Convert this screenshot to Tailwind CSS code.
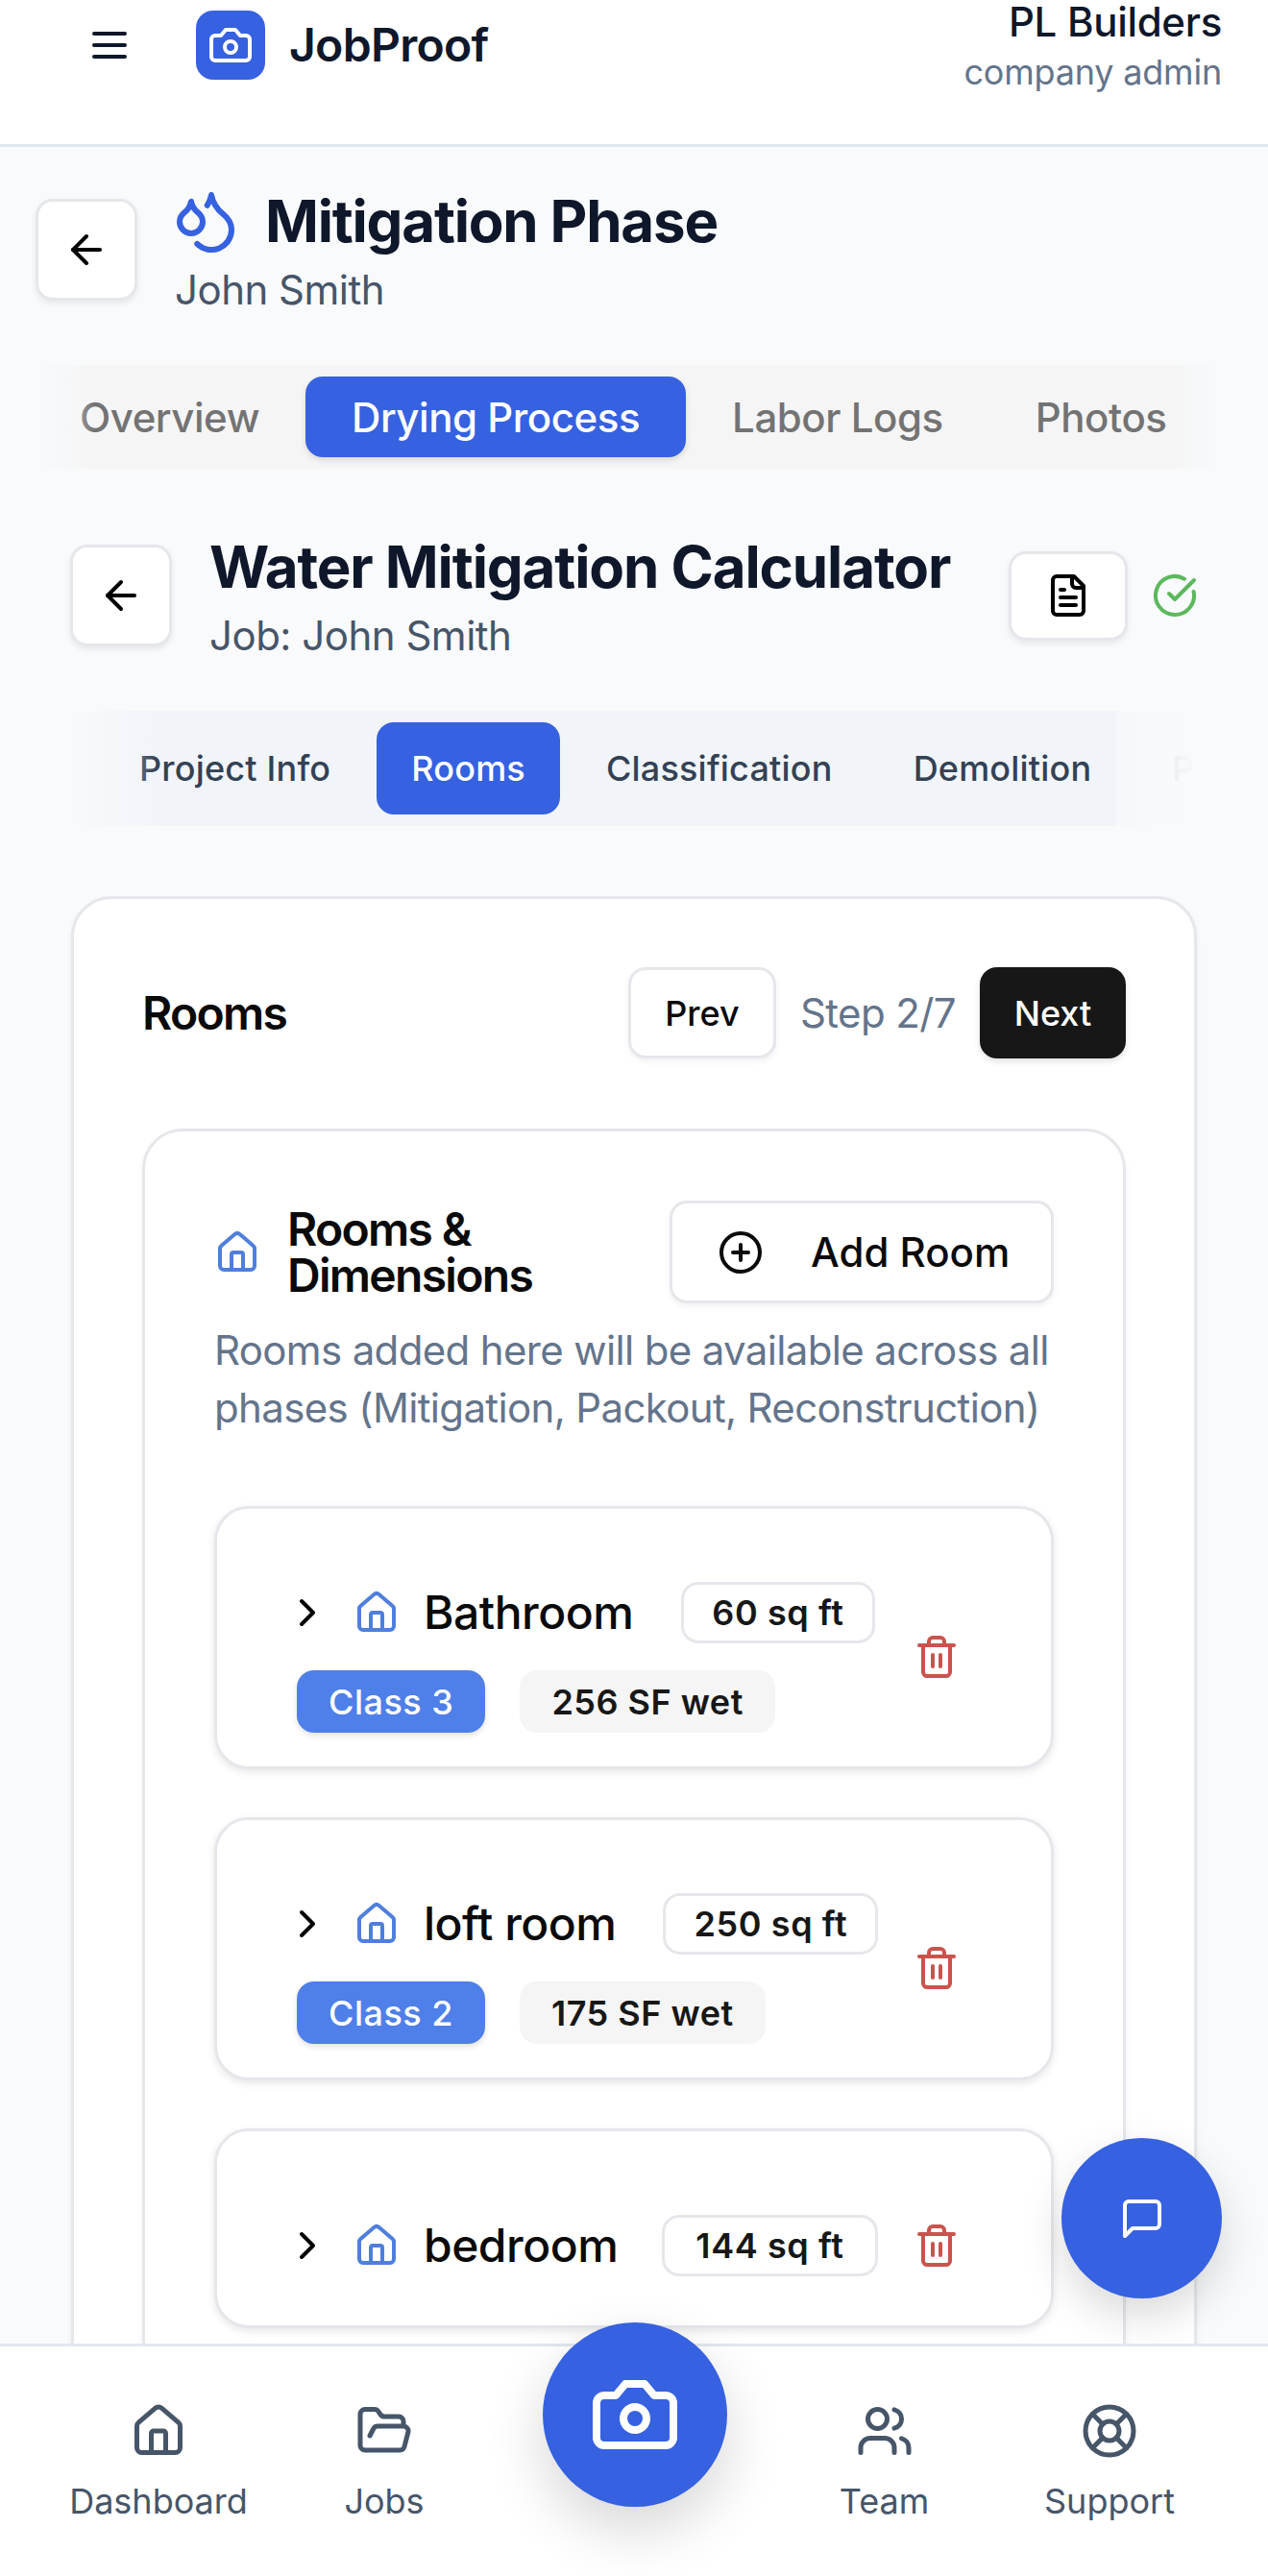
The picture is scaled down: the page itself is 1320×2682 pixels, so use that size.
<!DOCTYPE html>
<html lang="en">
<head>
    <meta charset="UTF-8">
    <meta name="viewport" content="width=device-width, initial-scale=1.0">
    <title>JobProof - Rooms</title>
    <script src="https://cdn.jsdelivr.net/npm/@tailwindcss/browser@4"></script>
</head>
<body class="relative h-[2682px] overflow-hidden bg-[#f8fafc] font-[Inter,sans-serif]">
    <header class="flex h-[153px] justify-between border-b-[3px] border-[#e2e8f0] bg-white pl-[90px] pr-[48px]">
        <div class="flex h-[94px] items-center">
            <svg class="h-12 w-12 text-[#0f172a]" viewBox="0 0 24 24" fill="none" stroke="currentColor" stroke-width="2" stroke-linecap="round"><path d="M4 12h16M4 6h16M4 18h16"/></svg>
            <div class="ml-[66px] flex h-[72px] w-[72px] items-center justify-center rounded-[18px] bg-[#3661e0]">
                <svg class="h-12 w-12 text-white" viewBox="0 0 24 24" fill="none" stroke="currentColor" stroke-width="2" stroke-linecap="round" stroke-linejoin="round"><path d="M14.5 4h-5L7 7H4a2 2 0 0 0-2 2v9a2 2 0 0 0 2 2h16a2 2 0 0 0 2-2V9a2 2 0 0 0-2-2h-3l-2.5-3z"/><circle cx="12" cy="13" r="3"/></svg>
            </div>
            <span class="ml-[25px] text-[48px] font-semibold leading-none tracking-[-0.7px] text-[#0f172a]">JobProof</span>
        </div>
        <div class="text-right">
            <div class="mt-[-7px] text-[42px] font-medium leading-[60px] tracking-[-0.3px] text-[#0f172a]">PL Builders</div>
            <div class="mt-[-5px] text-[36px] leading-[54px] tracking-[-0.2px] text-[#64748b]">company admin</div>
        </div>
    </header>

    <main>
        <section class="px-[38px]">
            <div class="mt-[35px] flex items-center gap-[39px]">
                <button class="-ml-px flex h-[106px] w-[106px] items-center justify-center rounded-[18px] border-[3px] border-[#e5e7eb] bg-white shadow-[0_3px_6px_rgba(0,0,0,0.08)]">
                    <svg class="h-12 w-12 text-black" viewBox="0 0 24 24" fill="none" stroke="currentColor" stroke-width="2" stroke-linecap="round" stroke-linejoin="round"><path d="m12 19-7-7 7-7"/><path d="M19 12H5"/></svg>
                </button>
                <div>
                    <div class="flex items-center gap-[34px]">
                        <svg class="h-[72px] w-[72px] -my-2 -ml-1 -mr-[8px] text-[#3661e0]" viewBox="0 0 24 24" fill="none" stroke="currentColor" stroke-width="2" stroke-linecap="round" stroke-linejoin="round"><path d="M7 16.3c2.2 0 4-1.83 4-4.05 0-1.16-.57-2.26-1.71-3.19S7.29 6.75 7 5.3c-.29 1.45-1.14 2.84-2.29 3.76S3 11.1 3 12.25c0 2.22 1.8 4.05 4 4.05z"/><path d="M12.56 6.6A10.97 10.97 0 0 0 14 3.02c.5 2.5 2 4.9 4 6.5s3 3.5 3 5.5a6.98 6.98 0 0 1-11.91 4.97"/></svg>
                        <h1 class="text-[60px] font-bold leading-[84px] tracking-[-1.2px] text-[#0f172a]">Mitigation Phase</h1>
                    </div>
                    <p class="text-[42px] leading-[60px] tracking-[-0.5px] text-[#475569]">John Smith</p>
                </div>
            </div>

            <div class="relative mt-12 h-[108px] w-[1232px] overflow-hidden bg-[#f5f5f5]">
                <div class="-ml-[3px] flex h-full items-center whitespace-nowrap text-[42px] font-medium tracking-[-0.45px] text-[#737373]">
                    <span class="px-12">Overview</span>
                    <span class="flex h-[84px] items-center rounded-[18px] bg-[#3661e0] px-12 text-white shadow-[0_3px_6px_rgba(0,0,0,0.12)]">Drying Process</span>
                    <span class="px-12">Labor Logs</span>
                    <span class="px-12">Photos</span>
                </div>
                <div class="absolute inset-y-0 left-0 w-[60px] bg-linear-to-r from-[#f8fafc] to-transparent"></div>
                <div class="absolute inset-y-0 right-0 w-[50px] bg-linear-to-l from-[#f8fafc] to-transparent"></div>
            </div>
        </section>

        <section class="px-[74px]">
            <div class="mt-[60px] flex items-center justify-between">
                <div class="flex items-center gap-[39px]">
                    <button class="-ml-px flex h-[106px] w-[106px] items-center justify-center rounded-[18px] border-[3px] border-[#e5e7eb] bg-white shadow-[0_3px_6px_rgba(0,0,0,0.08)]">
                        <svg class="h-12 w-12 text-black" viewBox="0 0 24 24" fill="none" stroke="currentColor" stroke-width="2" stroke-linecap="round" stroke-linejoin="round"><path d="m12 19-7-7 7-7"/><path d="M19 12H5"/></svg>
                    </button>
                    <div>
                        <h2 class="whitespace-nowrap text-[60px] font-bold leading-[84px] tracking-[-1.1px] text-[#0f172a]">Water Mitigation Calculator</h2>
                        <p class="text-[42px] leading-[60px] tracking-[-0.5px] text-[#475569]">Job: John Smith</p>
                    </div>
                </div>
                <div class="-mr-px flex items-center gap-[25px]">
                    <button class="flex h-[93px] w-[124px] items-center justify-center rounded-[18px] border-[3px] border-[#e5e7eb] bg-white shadow-[0_3px_6px_rgba(0,0,0,0.08)]">
                        <svg class="h-12 w-12 text-black" viewBox="0 0 24 24" fill="none" stroke="currentColor" stroke-width="2" stroke-linecap="round" stroke-linejoin="round"><path d="M15 2H6a2 2 0 0 0-2 2v16a2 2 0 0 0 2 2h12a2 2 0 0 0 2-2V7Z"/><path d="M14 2v4a2 2 0 0 0 2 2h4"/><path d="M10 9H8"/><path d="M16 13H8"/><path d="M16 17H8"/></svg>
                    </button>
                    <svg class="h-12 w-12 text-[#5cb85c]" viewBox="0 0 24 24" fill="none" stroke="currentColor" stroke-width="2" stroke-linecap="round" stroke-linejoin="round"><path d="M21.801 10A10 10 0 1 1 17 3.335"/><path d="m9 11 3 3L22 4"/></svg>
                </div>
            </div>

            <div class="relative mt-12 h-[120px] overflow-hidden bg-[#f1f5f9]">
                <div class="flex h-full items-center gap-3 whitespace-nowrap pl-[35px] text-[36px] font-medium tracking-[0.2px] text-[#334155]">
                    <span class="px-9">Project Info</span>
                    <span class="flex h-24 items-center rounded-[18px] bg-[#3661e0] px-9 text-white">Rooms</span>
                    <span class="px-9">Classification</span>
                    <span class="px-9">Demolition</span>
                    <span class="px-9">P</span>
                </div>
                <div class="absolute inset-y-0 left-0 w-[90px] bg-linear-to-r from-[#f8fafc] to-transparent"></div>
                <div class="absolute inset-y-0 right-0 w-[84px] bg-linear-to-l from-[#f8fafc] via-[#f8fafc]/90 to-[#f8fafc]/70"></div>
            </div>

            <div class="mt-[73px] h-[1700px] rounded-[42px] border-[3px] border-[#e5e7eb] bg-white px-[71px] pt-[71px] shadow-[0_3px_6px_rgba(0,0,0,0.05)]">
                <div class="flex items-center justify-between">
                    <h3 class="text-[48px] font-semibold tracking-[-1.7px] text-[#0a0a0a]">Rooms</h3>
                    <div class="flex items-center">
                        <button class="flex h-[95px] w-[154px] items-center justify-center rounded-[18px] border-[3px] border-[#e5e7eb] bg-white text-[36px] font-medium text-[#0a0a0a] shadow-[0_3px_6px_rgba(0,0,0,0.06)]">Prev</button>
                        <span class="ml-[25px] mr-[25px] text-[42px] tracking-[-0.6px] text-[#64748b]">Step 2/7</span>
                        <button class="flex h-[95px] w-[152px] items-center justify-center rounded-[18px] bg-[#171717] text-[36px] font-medium text-white shadow-[0_3px_6px_rgba(0,0,0,0.12)]">Next</button>
                    </div>
                </div>

                <div class="mt-[73px] h-[1500px] rounded-[42px] border-[3px] border-[#e5e7eb] bg-white px-[72px] pt-[72px] shadow-[0_3px_6px_rgba(0,0,0,0.05)]">
                    <div class="flex items-center justify-between">
                        <div class="flex items-center gap-7">
                            <svg class="h-12 w-12 text-[#4f7fdc]" viewBox="0 0 24 24" fill="none" stroke="currentColor" stroke-width="2" stroke-linecap="round" stroke-linejoin="round"><path d="M15 21v-8a1 1 0 0 0-1-1h-4a1 1 0 0 0-1 1v8"/><path d="M3 10a2 2 0 0 1 .709-1.528l7-5.999a2 2 0 0 1 2.582 0l7 5.999A2 2 0 0 1 21 10v9a2 2 0 0 1-2 2H5a2 2 0 0 1-2-2z"/></svg>
                            <h4 class="w-[300px] text-[48px] font-semibold leading-[48px] tracking-[-1.7px] text-[#0a0a0a]">Rooms &amp; Dimensions</h4>
                        </div>
                        <button class="flex h-[107px] w-[400px] items-center rounded-[18px] border-[3px] border-[#e5e7eb] bg-white pl-[47px] text-[42px] font-medium text-[#0a0a0a] shadow-[0_3px_6px_rgba(0,0,0,0.06)]">
                            <svg class="mr-[25px] h-12 w-12" viewBox="0 0 24 24" fill="none" stroke="currentColor" stroke-width="2" stroke-linecap="round"><circle cx="12" cy="12" r="10"/><path d="M8 12h8"/><path d="M12 8v8"/></svg>
                            <span class="ml-[24px]">Add Room</span>
                        </button>
                    </div>
                    <p class="mt-[19px] text-[42px] leading-[60px] tracking-[-0.65px] text-[#64748b]">Rooms added here will be available across all phases (Mitigation, Packout, Reconstruction)</p>

                    <div class="mt-[72px] flex flex-col gap-[50px]">
                        <article class="flex h-[274px] items-start justify-between rounded-[36px] border-[3px] border-[#e5e7eb] bg-white pl-[83px] pr-[95px] pt-[76px] shadow-[0_3px_9px_rgba(0,0,0,0.1)]">
                            <div>
                                <div class="-ml-[13px] flex h-[64px] items-center">
                                    <svg class="h-12 w-12 text-black" viewBox="0 0 24 24" fill="none" stroke="currentColor" stroke-width="2" stroke-linecap="round" stroke-linejoin="round"><path d="m9 18 6-6-6-6"/></svg>
                                    <svg class="ml-6 h-12 w-12 text-[#4f7fdc]" viewBox="0 0 24 24" fill="none" stroke="currentColor" stroke-width="2" stroke-linecap="round" stroke-linejoin="round"><path d="M15 21v-8a1 1 0 0 0-1-1h-4a1 1 0 0 0-1 1v8"/><path d="M3 10a2 2 0 0 1 .709-1.528l7-5.999a2 2 0 0 1 2.582 0l7 5.999A2 2 0 0 1 21 10v9a2 2 0 0 1-2 2H5a2 2 0 0 1-2-2z"/></svg>
                                    <span class="ml-[25px] text-[48px] font-medium tracking-[-0.5px] text-[#0a0a0a]">Bathroom</span>
                                    <span class="ml-[50px] flex h-[64px] items-center rounded-[18px] border-[3px] border-[#e5e7eb] px-[29px] text-[36px] font-semibold tracking-[0.6px] text-[#171717]">60 sq ft</span>
                                </div>
                                <div class="mt-7 flex gap-9">
                                    <span class="flex h-[65px] items-center rounded-[18px] bg-[#4f7fe8] px-[33px] text-[36px] font-medium tracking-[0.5px] text-white shadow-[0_3px_6px_rgba(0,0,0,0.12)]">Class 3</span>
                                    <span class="flex h-[65px] items-center rounded-[18px] bg-[#f5f5f5] px-[33px] text-[36px] font-semibold tracking-[0.5px] text-[#171717]">256 SF wet</span>
                                </div>
                            </div>
                            <svg class="mt-[54px] h-12 w-12 text-[#c9544d]" viewBox="0 0 24 24" fill="none" stroke="currentColor" stroke-width="2" stroke-linecap="round" stroke-linejoin="round"><path d="M3 6h18"/><path d="M19 6v14c0 1-1 2-2 2H7c-1 0-2-1-2-2V6"/><path d="M8 6V4c0-1 1-2 2-2h4c1 0 2 1 2 2v2"/><path d="M10 11v6"/><path d="M14 11v6"/></svg>
                        </article>

                        <article class="flex h-[274px] items-start justify-between rounded-[36px] border-[3px] border-[#e5e7eb] bg-white pl-[83px] pr-[95px] pt-[76px] shadow-[0_3px_9px_rgba(0,0,0,0.1)]">
                            <div>
                                <div class="-ml-[13px] flex h-[64px] items-center">
                                    <svg class="h-12 w-12 text-black" viewBox="0 0 24 24" fill="none" stroke="currentColor" stroke-width="2" stroke-linecap="round" stroke-linejoin="round"><path d="m9 18 6-6-6-6"/></svg>
                                    <svg class="ml-6 h-12 w-12 text-[#4f7fdc]" viewBox="0 0 24 24" fill="none" stroke="currentColor" stroke-width="2" stroke-linecap="round" stroke-linejoin="round"><path d="M15 21v-8a1 1 0 0 0-1-1h-4a1 1 0 0 0-1 1v8"/><path d="M3 10a2 2 0 0 1 .709-1.528l7-5.999a2 2 0 0 1 2.582 0l7 5.999A2 2 0 0 1 21 10v9a2 2 0 0 1-2 2H5a2 2 0 0 1-2-2z"/></svg>
                                    <span class="ml-[25px] text-[48px] font-medium tracking-[-0.5px] text-[#0a0a0a]">loft room</span>
                                    <span class="ml-[49px] flex h-[64px] items-center rounded-[18px] border-[3px] border-[#e5e7eb] px-[29px] text-[36px] font-semibold tracking-[0.6px] text-[#171717]">250 sq ft</span>
                                </div>
                                <div class="mt-7 flex gap-9">
                                    <span class="flex h-[65px] items-center rounded-[18px] bg-[#4f7fe8] px-[33px] text-[36px] font-medium tracking-[0.5px] text-white shadow-[0_3px_6px_rgba(0,0,0,0.12)]">Class 2</span>
                                    <span class="flex h-[65px] items-center rounded-[18px] bg-[#f5f5f5] px-[33px] text-[36px] font-semibold tracking-[0.5px] text-[#171717]">175 SF wet</span>
                                </div>
                            </div>
                            <svg class="mt-[54px] h-12 w-12 text-[#c9544d]" viewBox="0 0 24 24" fill="none" stroke="currentColor" stroke-width="2" stroke-linecap="round" stroke-linejoin="round"><path d="M3 6h18"/><path d="M19 6v14c0 1-1 2-2 2H7c-1 0-2-1-2-2V6"/><path d="M8 6V4c0-1 1-2 2-2h4c1 0 2 1 2 2v2"/><path d="M10 11v6"/><path d="M14 11v6"/></svg>
                        </article>

                        <article class="flex h-[208px] items-center justify-between rounded-[36px] border-[3px] border-[#e5e7eb] bg-white pl-[83px] pr-[95px] pt-[36px] shadow-[0_3px_9px_rgba(0,0,0,0.1)]">
                            <div class="-ml-[13px] flex h-[64px] items-center">
                                <svg class="h-12 w-12 text-black" viewBox="0 0 24 24" fill="none" stroke="currentColor" stroke-width="2" stroke-linecap="round" stroke-linejoin="round"><path d="m9 18 6-6-6-6"/></svg>
                                <svg class="ml-6 h-12 w-12 text-[#4f7fdc]" viewBox="0 0 24 24" fill="none" stroke="currentColor" stroke-width="2" stroke-linecap="round" stroke-linejoin="round"><path d="M15 21v-8a1 1 0 0 0-1-1h-4a1 1 0 0 0-1 1v8"/><path d="M3 10a2 2 0 0 1 .709-1.528l7-5.999a2 2 0 0 1 2.582 0l7 5.999A2 2 0 0 1 21 10v9a2 2 0 0 1-2 2H5a2 2 0 0 1-2-2z"/></svg>
                                <span class="ml-[25px] text-[48px] font-medium tracking-[-0.5px] text-[#0a0a0a]">bedroom</span>
                                <span class="ml-[46px] flex h-[64px] items-center rounded-[18px] border-[3px] border-[#e5e7eb] px-[32px] text-[36px] font-semibold tracking-[0.6px] text-[#171717]">144 sq ft</span>
                            </div>
                            <svg class="h-12 w-12 text-[#c9544d]" viewBox="0 0 24 24" fill="none" stroke="currentColor" stroke-width="2" stroke-linecap="round" stroke-linejoin="round"><path d="M3 6h18"/><path d="M19 6v14c0 1-1 2-2 2H7c-1 0-2-1-2-2V6"/><path d="M8 6V4c0-1 1-2 2-2h4c1 0 2 1 2 2v2"/><path d="M10 11v6"/><path d="M14 11v6"/></svg>
                        </article>
                    </div>
                </div>
            </div>
        </section>
    </main>

    <button class="absolute left-[1105px] top-[2226px] z-10 flex h-[167px] w-[167px] items-center justify-center rounded-full bg-[#3661e0] shadow-[0_18px_45px_rgba(0,0,0,0.15)]">
        <svg class="h-12 w-12 text-white" viewBox="0 0 24 24" fill="none" stroke="currentColor" stroke-width="2" stroke-linecap="round" stroke-linejoin="round"><path d="M21 15a2 2 0 0 1-2 2H7l-4 4V5a2 2 0 0 1 2-2h14a2 2 0 0 1 2 2z"/></svg>
    </button>

    <nav class="absolute inset-x-0 bottom-0 z-20 flex h-[242px] border-t-[3px] border-[#e2e8f0] bg-white pl-[48px] text-[36px] text-[#475569]">
        <a class="flex w-[234px] flex-col items-center pt-[58px]">
            <svg class="h-[60px] w-[60px]" viewBox="0 0 24 24" fill="none" stroke="currentColor" stroke-width="2" stroke-linecap="round" stroke-linejoin="round"><path d="M15 21v-8a1 1 0 0 0-1-1h-4a1 1 0 0 0-1 1v8"/><path d="M3 10a2 2 0 0 1 .709-1.528l7-5.999a2 2 0 0 1 2.582 0l7 5.999A2 2 0 0 1 21 10v9a2 2 0 0 1-2 2H5a2 2 0 0 1-2-2z"/></svg>
            <span class="mt-[19px] leading-[48px]">Dashboard</span>
        </a>
        <a class="flex w-[236px] flex-col items-center pt-[58px]">
            <svg class="h-[60px] w-[60px]" viewBox="0 0 24 24" fill="none" stroke="currentColor" stroke-width="2" stroke-linecap="round" stroke-linejoin="round"><path d="m6 14 1.5-2.9A2 2 0 0 1 9.24 10H20a2 2 0 0 1 1.94 2.5l-1.54 6a2 2 0 0 1-1.95 1.5H4a2 2 0 0 1-2-2V5a2 2 0 0 1 2-2h3.9a2 2 0 0 1 1.69.9l.81 1.2a2 2 0 0 0 1.67.9H18a2 2 0 0 1 2 2v2"/></svg>
            <span class="mt-[19px] leading-[48px]">Jobs</span>
        </a>
        <div class="relative w-[285px]">
            <button class="absolute left-[47px] top-[-25px] flex h-[192px] w-[192px] items-center justify-center rounded-full bg-[#3661e0] shadow-[0_24px_60px_rgba(0,0,0,0.16)]">
                <svg class="h-[96px] w-[96px] text-white" viewBox="0 0 24 24" fill="none" stroke="currentColor" stroke-width="2" stroke-linecap="round" stroke-linejoin="round"><path d="M14.5 4h-5L7 7H4a2 2 0 0 0-2 2v9a2 2 0 0 0 2 2h16a2 2 0 0 0 2-2V9a2 2 0 0 0-2-2h-3l-2.5-3z"/><circle cx="12" cy="13" r="3"/></svg>
            </button>
        </div>
        <a class="flex w-[235px] flex-col items-center pt-[58px]">
            <svg class="h-[60px] w-[60px]" viewBox="0 0 24 24" fill="none" stroke="currentColor" stroke-width="2" stroke-linecap="round" stroke-linejoin="round"><path d="M16 21v-2a4 4 0 0 0-4-4H6a4 4 0 0 0-4 4v2"/><circle cx="9" cy="7" r="4"/><path d="M22 21v-2a4 4 0 0 0-3-3.87"/><path d="M16 3.13a4 4 0 0 1 0 7.75"/></svg>
            <span class="mt-[19px] leading-[48px]">Team</span>
        </a>
        <a class="flex w-[234px] flex-col items-center pt-[58px]">
            <svg class="h-[60px] w-[60px]" viewBox="0 0 24 24" fill="none" stroke="currentColor" stroke-width="2" stroke-linecap="round" stroke-linejoin="round"><circle cx="12" cy="12" r="10"/><path d="m4.93 4.93 4.24 4.24"/><path d="m14.83 9.17 4.24-4.24"/><path d="m14.83 14.83 4.24 4.24"/><path d="m9.17 14.83-4.24 4.24"/><circle cx="12" cy="12" r="4"/></svg>
            <span class="mt-[19px] leading-[48px]">Support</span>
        </a>
    </nav>
</body>
</html>
